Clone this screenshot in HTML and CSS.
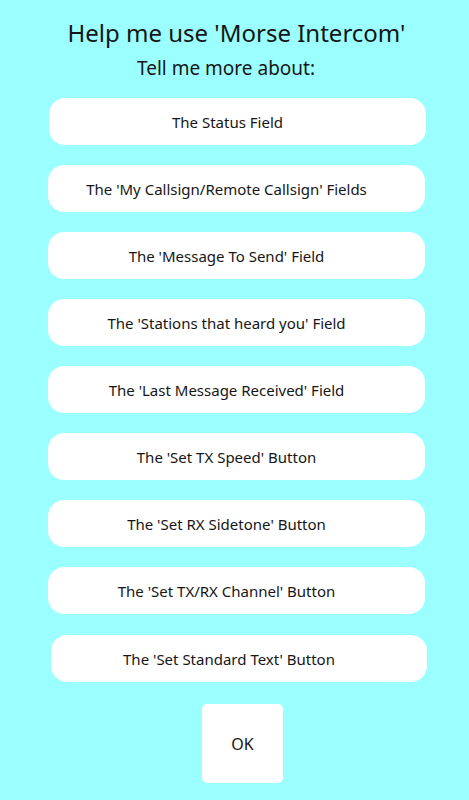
FILE: index.html
```html
<!DOCTYPE html>
<html>

<head>
    <title>Help - Morse Intercom</title>
    <link rel="stylesheet" href="styles.css">
</head>

<body>
    <div class="screen">
        <h1 class="title">Help me use 'Morse Intercom'</h1>
        <p class="subtitle">Tell me more about:</p>

        <div class="topics">
            <button class="topic topic-first">The Status Field</button>
            <button class="topic topic-wide">The 'My Callsign/Remote Callsign' Fields</button>
            <button class="topic">The 'Message To Send' Field</button>
            <button class="topic">The 'Stations that heard you' Field</button>
            <button class="topic">The 'Last Message Received' Field</button>
            <button class="topic">The 'Set TX Speed' Button</button>
            <button class="topic">The 'Set RX Sidetone' Button</button>
            <button class="topic">The 'Set TX/RX Channel' Button</button>
            <button class="topic topic-last">The 'Set Standard Text' Button</button>
        </div>

        <button class="ok">OK</button>
    </div>
</body>

</html>
```

FILE: styles.css
```css
body {
    margin: 0;
    background-color: #9bfeff;
    font-family: "Noto Sans", "Open Sans", sans-serif;
    color: #161616;
}

.screen {
    display: flex;
    flex-direction: column;
    padding-top: 17px;
}

.title {
    margin: 0;
    font-size: 24px;
    font-weight: normal;
    line-height: 32px;
    text-align: center;
    padding-left: 4px;
}

.subtitle {
    margin: 6px 0 0 0;
    font-size: 19px;
    line-height: 26px;
    text-align: center;
    padding-right: 17px;
}

.topics {
    display: flex;
    flex-direction: column;
    gap: 20px;
    margin-top: 17px;
    padding-left: 48px;
}

.topic {
    width: 377px;
    height: 47px;
    border: none;
    border-radius: 16px;
    background: #fff;
    font-family: inherit;
    font-size: 15px;
    color: #161616;
    padding: 0 20px 0 0;
    text-align: center;
}

.topic-first {
    margin-left: 1px;
}

.topic-wide {
    margin-left: 0;
}

.topic-last {
    margin-left: 3px;
    margin-top: 1px;
    width: 376px;
}

.ok {
    align-self: flex-start;
    margin: 22px 0 0 202px;
    width: 81px;
    height: 79px;
    border: none;
    border-radius: 5px;
    background: #fff;
    font-family: inherit;
    font-size: 16px;
    color: #161616;
    padding: 0;
}
```
